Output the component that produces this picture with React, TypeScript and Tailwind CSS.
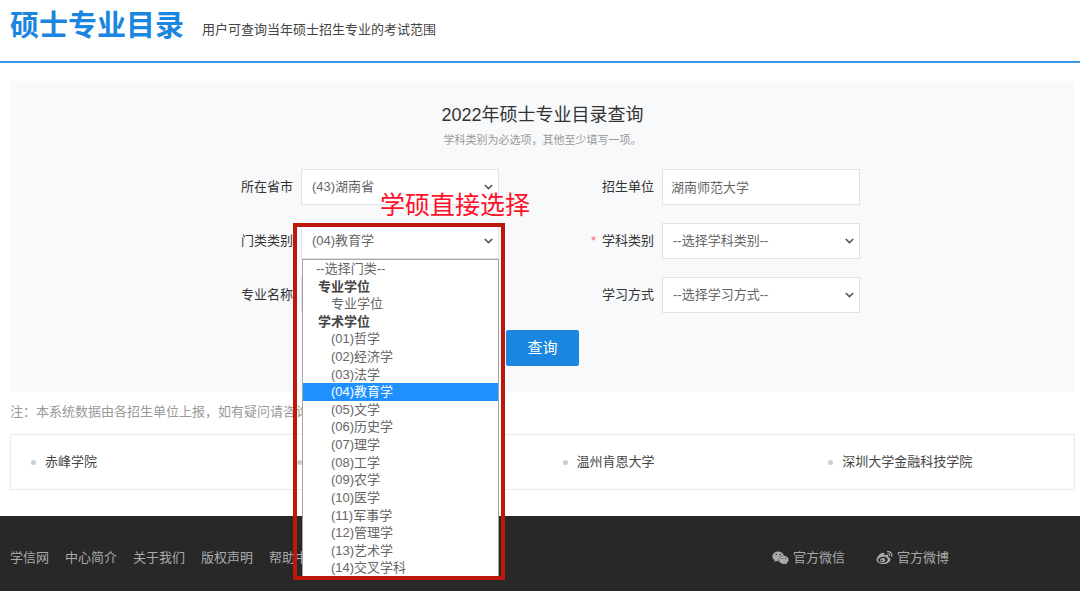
import React, { useState } from "react";
import { FaWeibo, FaWeixin } from "react-icons/fa";

type Option = { value: string; label: string };
type OptionGroup = { label: string; options: Option[] };

const CATEGORY_GROUPS: OptionGroup[] = [
  { label: "专业学位", options: [{ value: "zyxw", label: "专业学位" }] },
  {
    label: "学术学位",
    options: [
      { value: "01", label: "(01)哲学" },
      { value: "02", label: "(02)经济学" },
      { value: "03", label: "(03)法学" },
      { value: "04", label: "(04)教育学" },
      { value: "05", label: "(05)文学" },
      { value: "06", label: "(06)历史学" },
      { value: "07", label: "(07)理学" },
      { value: "08", label: "(08)工学" },
      { value: "09", label: "(09)农学" },
      { value: "10", label: "(10)医学" },
      { value: "11", label: "(11)军事学" },
      { value: "12", label: "(12)管理学" },
      { value: "13", label: "(13)艺术学" },
      { value: "14", label: "(14)交叉学科" },
    ],
  },
];

// an empty name leaves only the bullet
const SCHOOLS = ["赤峰学院", "", "温州肯恩大学", "深圳大学金融科技学院"];
const FOOTER_LINKS = ["学信网", "中心简介", "关于我们", "版权声明", "帮助中心"];

const CONTROL = "block h-9 w-full border border-[#e0e2e4] bg-white text-[13px] text-[#666] outline-none";

function Field({ id, label, required, children }: { id: string; label: string; required?: boolean; children: React.ReactNode }) {
  return (
    <div className="flex items-center justify-end gap-2">
      <label htmlFor={id} className="text-[13px] leading-5 whitespace-nowrap text-[#333]">
        {required && <span className="mr-[6px] text-[#f56c6c]">*</span>}
        {label}
      </label>
      <div className="relative w-[198px] shrink-0">{children}</div>
    </div>
  );
}

function Select({ id, value, onChange, children }: { id: string; value?: string; onChange?: (v: string) => void; children: React.ReactNode }) {
  return (
    <>
      <select
        id={id}
        value={value}
        onChange={(e) => onChange?.(e.target.value)}
        className={`${CONTROL} appearance-none pr-6 pl-[10px]`}
      >
        {children}
      </select>
      <svg viewBox="0 0 9 6" className="pointer-events-none absolute top-[15px] right-[6px] h-[6px] w-[9px]" aria-hidden="true">
        <path d="M0.8 1l3.7 3.6L8.2 1" fill="none" stroke="#555" strokeWidth="1.6" />
      </svg>
    </>
  );
}

function CategoryList({ value, onPick }: { value: string; onPick: (v: string) => void }) {
  return (
    <ul
      role="listbox"
      aria-label="门类类别"
      className="absolute top-full right-0 left-px z-10 flex h-[319px] flex-col border border-[#a5a5a5] bg-white text-[13px] leading-[17px] text-[#666]"
    >
      <li role="option" aria-selected={false} className="flex-1 pl-[13px]">
        --选择门类--
      </li>
      {CATEGORY_GROUPS.map((group) => (
        <React.Fragment key={group.label}>
          <li role="presentation" className="flex-1 pl-[15px] font-bold text-[#444]">
            {group.label}
          </li>
          {group.options.map((o) => (
            <li
              key={o.value}
              role="option"
              aria-selected={o.value === value}
              onClick={() => onPick(o.value)}
              className={o.value === value ? "flex-1 bg-[#1e90ff] pl-7 text-white" : "flex-1 pl-7"}
            >
              {o.label}
            </li>
          ))}
        </React.Fragment>
      ))}
    </ul>
  );
}

export default function App() {
  const [province, setProvince] = useState("43");
  const [school, setSchool] = useState("湖南师范大学");
  const [category, setCategory] = useState("04");
  const [major, setMajor] = useState("");

  return (
    <div className="flex min-h-screen flex-col bg-white font-['Liberation_Sans','Noto_Sans_CJK_SC',sans-serif]">
      <header className="flex items-end gap-[18px] border-b-2 border-[#3d98e6] pt-[6px] pb-[15px] pl-[10px]">
        <h1 className="text-[29px] leading-10 font-bold text-[#1a86e0]">硕士专业目录</h1>
        <p className="pb-[6px] text-[13px] leading-5 text-[#444]">用户可查询当年硕士招生专业的考试范围</p>
      </header>

      <main className="pr-[5px] pb-[26px] pl-[10px]">
        <form onSubmit={(e) => e.preventDefault()} className="mt-[18px] bg-[#f8f9fb] pt-5 pb-[26px]">
          <h2 className="text-center text-lg leading-7 text-[#333]">2022年硕士专业目录查询</h2>
          <p className="text-center text-[11px] leading-[22px] text-[#999]">学科类别为必选项，其他至少填写一项。</p>

          <div className="mt-[18px] grid grid-cols-[274px_274px] justify-center gap-x-[87px] gap-y-[18px]">
            <Field id="province" label="所在省市">
              <Select id="province" value={province} onChange={setProvince}>
                <option value="43">(43)湖南省</option>
              </Select>
            </Field>
            <Field id="school" label="招生单位">
              <input
                id="school"
                type="text"
                value={school}
                onChange={(e) => setSchool(e.target.value)}
                className={`${CONTROL} px-2 pb-[2px]`}
              />
            </Field>

            <Field id="category" label="门类类别">
              <Select id="category" value={category} onChange={setCategory}>
                {CATEGORY_GROUPS.map((group) => (
                  <optgroup key={group.label} label={group.label}>
                    {group.options.map((o) => (
                      <option key={o.value} value={o.value}>{o.label}</option>
                    ))}
                  </optgroup>
                ))}
              </Select>
              <CategoryList value={category} onPick={setCategory} />

              {/* Red guide frame and its caption */}
              <div className="pointer-events-none absolute top-0 -left-2 z-20 h-[357px] w-[212px] border-4 border-[#bf170b]" />
              <span className="pointer-events-none absolute -top-9 left-[79px] z-20 text-[25px] leading-9 whitespace-nowrap text-[#ff1029]">
                学硕直接选择
              </span>
            </Field>
            <Field id="subject" label="学科类别" required>
              <Select id="subject">
                <option>--选择学科类别--</option>
              </Select>
            </Field>

            <Field id="major" label="专业名称">
              <input
                id="major"
                type="text"
                value={major}
                onChange={(e) => setMajor(e.target.value)}
                className={`${CONTROL} px-2 pb-[2px]`}
              />
            </Field>
            <Field id="mode" label="学习方式">
              <Select id="mode">
                <option>--选择学习方式--</option>
              </Select>
            </Field>
          </div>

          <button type="submit" className="mx-auto mt-[17px] block h-9 w-[73px] rounded-xs bg-[#1a86e0] text-[15px] text-white">
            查询
          </button>
        </form>

        <p className="mt-[10px] text-[13px] leading-5 text-[#999]">注：本系统数据由各招生单位上报，如有疑问请咨询</p>

        <ul className="mt-3 grid h-14 grid-cols-4 items-center border border-[#eaebec] text-[13px] text-[#444]">
          {SCHOOLS.map((name, i) => (
            <li key={i} className="flex items-center gap-[9px] pl-5">
              <span className="h-[5px] w-[5px] rounded-full bg-[#ccc]" />
              {name && <a href="#">{name}</a>}
            </li>
          ))}
        </ul>
      </main>

      <footer className="flex flex-1 items-start justify-between bg-[#282828] pt-8 pr-[131px] pl-[10px] text-[13px] leading-5 text-[#aaa]">
        <nav className="flex gap-4">
          {FOOTER_LINKS.map((link) => (
            <a key={link} href="#">{link}</a>
          ))}
        </nav>
        <div className="flex gap-[31px]">
          <a href="#" className="flex items-center gap-1">
            <FaWeixin className="h-4 w-[17px]" />
            官方微信
          </a>
          <a href="#" className="flex items-center gap-1">
            <FaWeibo className="h-4 w-[17px]" />
            官方微博
          </a>
        </div>
      </footer>
    </div>
  );
}
